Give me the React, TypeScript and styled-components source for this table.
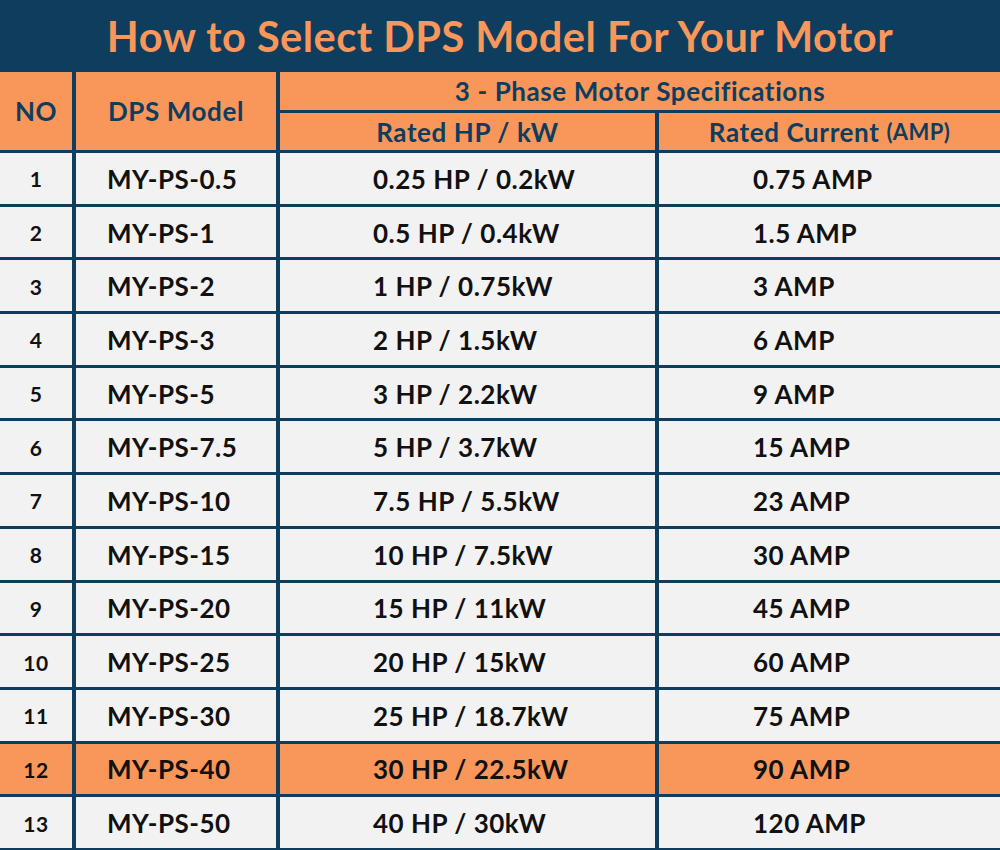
import React from 'react';
import styled, { createGlobalStyle } from 'styled-components';

const NAVY = '#0f3d5e';
const ORANGE = '#f9965a';
const CELL = '#f2f2f2';

const GlobalStyle = createGlobalStyle`
  html, body {
    margin: 0;
    padding: 0;
    background: ${NAVY};
    overflow: hidden;
  }
  body {
    font-family: Lato, "Open Sans", sans-serif;
  }
`;

interface Row {
  no: number;
  model: string;
  power: string;
  current: string;
  highlight?: boolean;
}

const rows: Row[] = [
  { no: 1, model: 'MY-PS-0.5', power: '0.25 HP / 0.2kW', current: '0.75 AMP' },
  { no: 2, model: 'MY-PS-1', power: '0.5 HP / 0.4kW', current: '1.5 AMP' },
  { no: 3, model: 'MY-PS-2', power: '1 HP / 0.75kW', current: '3 AMP' },
  { no: 4, model: 'MY-PS-3', power: '2 HP / 1.5kW', current: '6 AMP' },
  { no: 5, model: 'MY-PS-5', power: '3 HP / 2.2kW', current: '9 AMP' },
  { no: 6, model: 'MY-PS-7.5', power: '5 HP / 3.7kW', current: '15 AMP' },
  { no: 7, model: 'MY-PS-10', power: '7.5 HP / 5.5kW', current: '23 AMP' },
  { no: 8, model: 'MY-PS-15', power: '10 HP / 7.5kW', current: '30 AMP' },
  { no: 9, model: 'MY-PS-20', power: '15 HP / 11kW', current: '45 AMP' },
  { no: 10, model: 'MY-PS-25', power: '20 HP / 15kW', current: '60 AMP' },
  { no: 11, model: 'MY-PS-30', power: '25 HP / 18.7kW', current: '75 AMP' },
  { no: 12, model: 'MY-PS-40', power: '30 HP / 22.5kW', current: '90 AMP', highlight: true },
  { no: 13, model: 'MY-PS-50', power: '40 HP / 30kW', current: '120 AMP' },
];

const Page = styled.div`
  width: 1000px;
  height: 850px;
  background: ${NAVY};
  display: flex;
  flex-direction: column;
`;

const Title = styled.h1`
  margin: 0;
  height: 72px;
  display: flex;
  align-items: center;
  justify-content: center;
  color: ${ORANGE};
  font-size: 41.5px;
  font-weight: 700;
  letter-spacing: 0.5px;
`;

const Table = styled.div`
  display: grid;
  grid-template-columns: 72px 200px 375px 341px;
  grid-template-rows: 38px 37px repeat(13, 50.7px);
  column-gap: 4px;
  row-gap: 3px;
`;

const HeadCell = styled.div<{ $span?: string }>`
  background: ${ORANGE};
  color: ${NAVY};
  display: flex;
  align-items: center;
  justify-content: center;
  font-weight: 700;
  font-size: 26px;
  letter-spacing: 0.6px;
  ${p => p.$span}
`;

const Small = styled.span`
  font-size: 22px;
  margin-left: 7px;
  letter-spacing: 0.4px;
`;

const Cell = styled.div<{ $hl?: boolean; $pad?: number; $center?: boolean }>`
  background: ${p => (p.$hl ? ORANGE : CELL)};
  color: #111;
  display: flex;
  align-items: center;
  justify-content: ${p => (p.$center ? 'center' : 'flex-start')};
  padding-left: ${p => p.$pad ?? 0}px;
  font-weight: 700;
  font-size: ${p => (p.$center ? 21 : 26)}px;
  letter-spacing: 0.5px;
  padding-top: 1px;
`;

export default function App() {
  return (
    <>
      <GlobalStyle />
      <Page>
        <Title>How to Select DPS Model For Your Motor</Title>
        <Table>
          <HeadCell $span="grid-row: 1 / span 2;">NO</HeadCell>
          <HeadCell $span="grid-row: 1 / span 2;">DPS Model</HeadCell>
          <HeadCell $span="grid-column: 3 / span 2;">3 - Phase Motor Specifications</HeadCell>
          <HeadCell>Rated HP / kW</HeadCell>
          <HeadCell>
            Rated Current<Small>(AMP)</Small>
          </HeadCell>
          {rows.map(r => (
            <React.Fragment key={r.no}>
              <Cell $hl={r.highlight} $center>{r.no}</Cell>
              <Cell $hl={r.highlight} $pad={31}>{r.model}</Cell>
              <Cell $hl={r.highlight} $pad={93}>{r.power}</Cell>
              <Cell $hl={r.highlight} $pad={94}>{r.current}</Cell>
            </React.Fragment>
          ))}
        </Table>
      </Page>
    </>
  );
}
